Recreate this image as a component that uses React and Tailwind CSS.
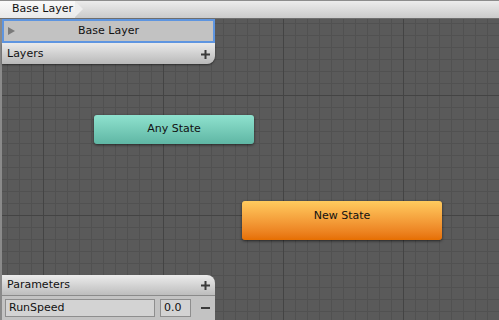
import React from "react";

const font = "font-['DejaVu_Sans',sans-serif]";

const Plus = () => (
  <svg width="9" height="9" viewBox="0 0 9 9" className="text-[#3a3a3a]">
    <rect x="3.5" y="0" width="2" height="9" fill="currentColor" />
    <rect x="0" y="3.5" width="9" height="2" fill="currentColor" />
  </svg>
);

const App = () => {
  return (
    <div className={`w-[499px] h-[320px] flex flex-col overflow-hidden bg-[#5a5a5a] ${font} text-[11px] text-[#111]`}>
      {/* Top breadcrumb bar */}
      <div className="h-[19px] shrink-0 border-t border-[#8c8c8c] border-b border-b-[#6e6e6e] bg-gradient-to-b from-[#ececec] to-[#cbcbcb] flex">
        <div className="relative h-full w-[75px] bg-gradient-to-b from-[#fafafa] to-[#e9e9e9] pl-[12px] flex items-center">
          Base Layer
          <div className="absolute right-[-8px] top-0 w-0 h-0 border-t-[8.5px] border-b-[8.5px] border-l-[8px] border-t-transparent border-b-transparent border-l-[#eeeeee]" />
        </div>
      </div>

      {/* Canvas */}
      <div className="relative flex-1 flex bg-[#5a5a5a] bg-[linear-gradient(to_right,#444444_1px,transparent_1px),linear-gradient(to_bottom,#444444_1px,transparent_1px),linear-gradient(to_right,#515151_1px,transparent_1px),linear-gradient(to_bottom,#515151_1px,transparent_1px)] bg-[size:120px_120px,120px_120px,12px_12px,12px_12px] bg-[position:43px_76px,43px_76px,7px_4px,7px_4px]">
        <div className="w-[2px] h-full bg-[#8a8a8a] shrink-0" />

        <div className="w-[213px] h-full flex flex-col justify-between relative z-10">
          {/* Layers panel */}
          <div className="flex flex-col">
            <div className="h-[24px] border-2 border-[#5e95e0] bg-[#c2c2c2] flex items-center relative">
              <div className="absolute left-[4px] w-0 h-0 border-t-[4px] border-b-[4px] border-l-[7px] border-t-transparent border-b-transparent border-l-[#7a7a7a]" />
              <span className="flex-1 text-center">Base Layer</span>
            </div>
            <div className="h-[21px] bg-gradient-to-b from-[#eaeaea] to-[#b9b9b9] rounded-br-[8px] flex items-center justify-between pl-[5px] pr-[5px] pt-[1px] shadow-[0_1px_2px_rgba(0,0,0,0.5)]">
              <span>Layers</span>
              <Plus />
            </div>
          </div>

          {/* Parameters panel */}
          <div className="flex flex-col">
            <div className="h-[21px] bg-gradient-to-b from-[#ececec] to-[#bdbdbd] rounded-tr-[8px] flex items-center justify-between pl-[5px] pr-[5px] border-b border-[#8a8a8a]">
              <span>Parameters</span>
              <Plus />
            </div>
            <div className="h-[24px] bg-[#c3c3c3] flex items-center pl-[3px] pr-[5px] gap-[5px]">
              <div className="w-[150px] h-[18px] bg-[#d3d3d3] border border-[#8e8e8e] flex items-center pl-[3px]">RunSpeed</div>
              <div className="w-[31px] h-[18px] bg-[#d3d3d3] border border-[#8e8e8e] flex items-center pl-[3px]">0.0</div>
              <div className="flex-1 flex justify-end">
                <div className="w-[9px] h-[2px] bg-[#3a3a3a]" />
              </div>
            </div>
          </div>
        </div>

        {/* State nodes */}
        <div className="absolute left-[94px] top-[96px] w-[160px] h-[29px] rounded-[3px] bg-gradient-to-b from-[#8fe2cf] to-[#5fb6a4] shadow-[0_1px_3px_rgba(0,0,0,0.6)] flex items-center justify-center">
          Any State
        </div>
        <div className="absolute left-[242px] top-[182px] w-[200px] h-[39px] rounded-[3px] bg-gradient-to-b from-[#ffcb5e] to-[#e66f00] shadow-[0_1px_3px_rgba(0,0,0,0.6)] flex justify-center pt-[7px]">
          New State
        </div>
      </div>
    </div>
  );
};

export default App;
